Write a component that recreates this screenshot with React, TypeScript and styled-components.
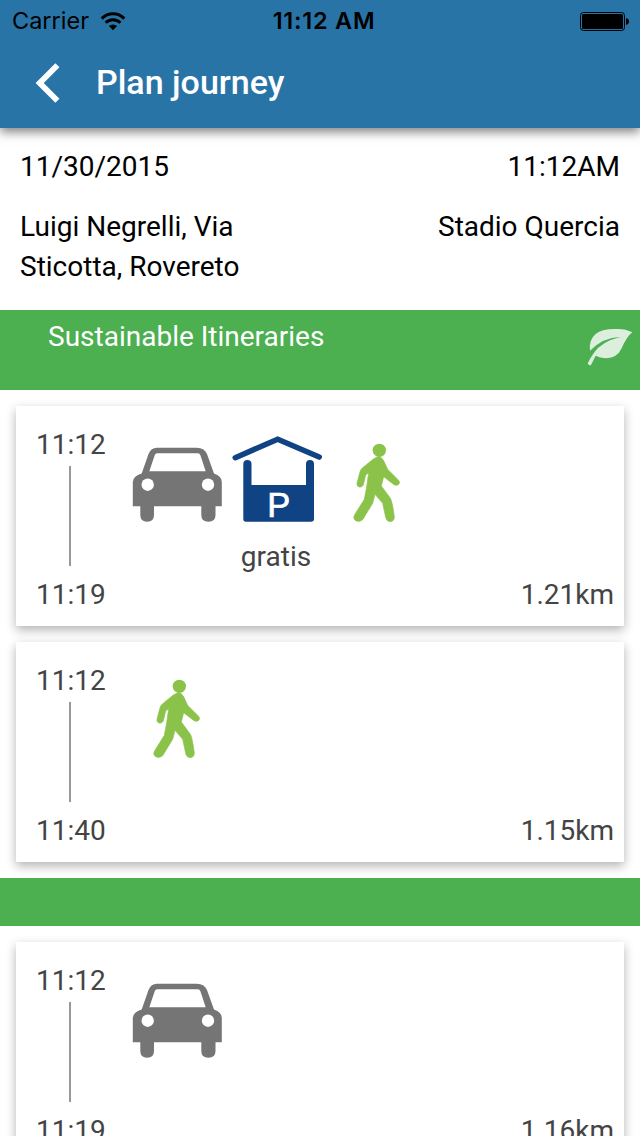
import React from "react";
import styled, { createGlobalStyle } from "styled-components";

const GlobalStyle = createGlobalStyle`
  * { box-sizing: border-box; }
  html, body { margin: 0; padding: 0; background: #fff; overflow: hidden; }
  body { font-family: Roboto, "Liberation Sans", sans-serif; font-size: 28px; line-height: 40px; color: #000; }
  svg { display: block; flex: none; }
`;

const Screen = styled.div`
  width: 640px;
  height: 1136px;
  overflow: hidden;
  background: #fff;
`;

const Header = styled.header`
  position: relative;
  height: 128px;
  background: #2974a7;
  box-shadow: 0 4px 10px rgba(0, 0, 0, 0.5);
`;

const StatusBar = styled.div`
  display: grid;
  grid-template-columns: 1fr auto 1fr;
  align-items: center;
  height: 40px;
  padding: 1px 11px 0 12px;
  font-family: Inter, "Liberation Sans", sans-serif;
  font-size: 23.5px;
`;

const Carrier = styled.div`
  display: flex;
  align-items: center;
  gap: 11px;
`;

const Clock = styled.div`
  font-weight: 600;
  font-size: 23.5px;
  letter-spacing: 0.75px;
  padding-left: 7px;
`;

const Battery = styled.div`
  display: flex;
  justify-content: flex-end;
`;

const NavBar = styled.div`
  display: flex;
  align-items: center;
  height: 86px;
  padding-left: 34px;
`;

const Title = styled.h1`
  margin: -2px 0 0 34px;
  font-size: 34px;
  font-weight: 500;
  line-height: 44px;
  color: #fff;
`;

const Summary = styled.section`
  display: flex;
  flex-direction: column;
  gap: 20px;
  height: 182px;
  padding: 19px 20px 0;
`;

const SummaryRow = styled.div`
  display: flex;
  justify-content: space-between;
`;

const Place = styled.div`
  max-width: 260px;
`;

const Banner = styled.div<{ $height: number }>`
  display: flex;
  justify-content: space-between;
  height: ${(p) => p.$height}px;
  padding: 7px 7px 0 48px;
  background: #4caf50;
  color: #fff;
`;

const LeafSlot = styled.div`
  padding-top: 11px;
`;

const CardList = styled.div`
  display: flex;
  flex-direction: column;
  gap: 16px;
  padding: 16px;
`;

const Card = styled.article`
  display: flex;
  height: 220px;
  padding: 19px 10px 0 18px;
  background: #fff;
  color: #444;
  box-shadow: 0 4px 10px rgba(0, 0, 0, 0.3);
`;

const Times = styled.div`
  display: flex;
  flex-direction: column;
  width: 72px;
  padding-left: 2px;
`;

const Rail = styled.div`
  width: 2px;
  height: 100px;
  margin: 1px 0 9px 33px;
  background: #999;
`;

const Legs = styled.div`
  display: flex;
  flex: 1;
  padding: 5px 0 0 22px;
`;

const Leg = styled.div`
  width: 100px;
  text-align: center;
`;

const LegNote = styled.div`
  margin-top: 7px;
  margin-left: -4px;
`;

const Distance = styled.div`
  align-self: flex-end;
  padding-bottom: 11px;
`;

const CarIcon = () => (
  <svg width="100" height="100" viewBox="0 0 100 100" fill="#757575">
    <path
      fillRule="evenodd"
      d="M29 17.8H69Q76 17.8 79 24L86 43.5Q93.8 46 93.8 52V76.3H87.5V85Q87.5 91.8 80.4 91.8Q73.3 91.8 73.3 85V76.3H26V85Q26 91.8 19.2 91.8Q12.3 91.8 12.3 85V76.3H4.8V52Q5 46 13.7 43.5L20.5 24Q23 17.8 29 17.8ZM29 23.2Q27.5 23.2 26.8 25L21.3 41.2H77.7L72.3 25Q71.5 23.2 70 23.2Z"
    />
    <circle cx="19.7" cy="54.7" r="6.2" fill="#fff" />
    <circle cx="80" cy="54.7" r="6.2" fill="#fff" />
  </svg>
);

const ParkingIcon = () => (
  <svg width="100" height="100" viewBox="0 0 100 100" fill="#104383">
    <path d="M7.3 27.7L49.7 9.2L91.2 27" fill="none" stroke="#104383" strokeWidth="5.6" strokeLinecap="round" strokeLinejoin="miter" />
    <path d="M15.3 34Q15.3 30 19.3 30Q23.5 30 23.5 34V55H78V34Q78 30 82 30Q86 30 86 34V89Q86 91.7 83 91.7H18Q15.3 91.7 15.3 89Z" />
    <text x="50.8" y="86.6" textAnchor="middle" fontFamily="Liberation Sans, sans-serif" fontSize="34.5" fill="#fff" stroke="#fff" strokeWidth="0.7">
      P
    </text>
  </svg>
);

const WalkIcon = () => (
  <svg width="100" height="100" viewBox="0 0 100 100" fill="#8bc34a">
    <g transform="translate(12 0) scale(.33333)">
      <circle cx="118" cy="61" r="20" />
      <path
        stroke="#8bc34a"
        strokeWidth="2"
        d="M112 81Q122 78 130 90L143 118L174 149Q181 155 177 162Q172 169 162 164L131 140L124 168L150 203Q157 212 163 262Q162 275 150 275Q139 274 137 262L128 220L105 193L98 220L68 269Q58 278 47 272Q37 265 44 254L73 208L80 170L86 128L77 135L70 165Q66 173 57 171Q49 168 51 160L60 125Q62 118 68 113L100 87Z"
      />
    </g>
  </svg>
);

const LeafIcon = () => (
  <svg width="46" height="39" viewBox="51 84 138 117" fill="#dbefdc">
    <path d="M60 152Q53 87 135 87Q165 85 187 97Q170 110 155 145Q140 178 100 174Q88 172 77 167L63 195Q57 199 53 190Q60 175 72 158Q95 125 150 111Q100 112 60 152Z" />
  </svg>
);

const WifiIcon = () => (
  <svg width="26" height="20" viewBox="0 0 26 20" fill="none" stroke="#000" strokeWidth="3">
    <path d="M1.7 7.6Q6.5 2.7 13 2.7T24.3 7.6" />
    <path d="M5.6 11.8Q8.6 8.7 13 8.7T20.4 11.8" />
    <path d="M13 19.2L8.9 15Q10.6 13.5 13 13.5T17.1 15Z" fill="#000" stroke="none" />
  </svg>
);

const BatteryIcon = () => (
  <svg width="49" height="19" viewBox="0 0 49 19">
    <rect x="0.5" y="0.5" width="44" height="18" rx="3" fill="none" stroke="#000" />
    <rect x="2" y="2" width="41" height="15" rx="1.5" />
    <path d="M46 6.3Q49 6.5 49 9.5T46 12.7Z" />
  </svg>
);

const BackIcon = () => (
  <svg width="28" height="42" viewBox="0 0 28 42" fill="none" stroke="#fff" strokeWidth="5.8">
    <path d="M23.4 3.3L5.7 21L23.4 38.7" />
  </svg>
);

type Mode = "car" | "parking" | "walk";

const icons: Record<Mode, React.FC> = { car: CarIcon, parking: ParkingIcon, walk: WalkIcon };

interface Trip {
  start: string;
  end: string;
  distance: string;
  legs: { mode: Mode; note?: string }[];
}

const sustainable: Trip[] = [
  {
    start: "11:12",
    end: "11:19",
    distance: "1.21km",
    legs: [{ mode: "car" }, { mode: "parking", note: "gratis" }, { mode: "walk" }],
  },
  { start: "11:12", end: "11:40", distance: "1.15km", legs: [{ mode: "walk" }] },
];

const others: Trip[] = [{ start: "11:12", end: "11:19", distance: "1.16km", legs: [{ mode: "car" }] }];

const TripCard = ({ trip }: { trip: Trip }) => (
  <Card>
    <Times>
      <span>{trip.start}</span>
      <Rail />
      <span>{trip.end}</span>
    </Times>
    <Legs>
      {trip.legs.map(({ mode, note }) => {
        const Icon = icons[mode];
        return (
          <Leg key={mode}>
            <Icon />
            {note && <LegNote>{note}</LegNote>}
          </Leg>
        );
      })}
    </Legs>
    <Distance>{trip.distance}</Distance>
  </Card>
);

export default function App() {
  return (
    <Screen>
      <GlobalStyle />
      <Header>
        <StatusBar>
          <Carrier>
            Carrier
            <WifiIcon />
          </Carrier>
          <Clock>11:12 AM</Clock>
          <Battery>
            <BatteryIcon />
          </Battery>
        </StatusBar>
        <NavBar>
          <BackIcon />
          <Title>Plan journey</Title>
        </NavBar>
      </Header>
      <Summary>
        <SummaryRow>
          <div>11/30/2015</div>
          <div>11:12AM</div>
        </SummaryRow>
        <SummaryRow>
          <Place>Luigi Negrelli, Via Sticotta, Rovereto</Place>
          <Place>Stadio Quercia</Place>
        </SummaryRow>
      </Summary>
      <Banner $height={80}>
        <span>Sustainable Itineraries</span>
        <LeafSlot>
          <LeafIcon />
        </LeafSlot>
      </Banner>
      <CardList>
        {sustainable.map((trip) => (
          <TripCard key={trip.end} trip={trip} />
        ))}
      </CardList>
      <Banner $height={48} />
      <CardList>
        {others.map((trip) => (
          <TripCard key={trip.end} trip={trip} />
        ))}
      </CardList>
    </Screen>
  );
}
